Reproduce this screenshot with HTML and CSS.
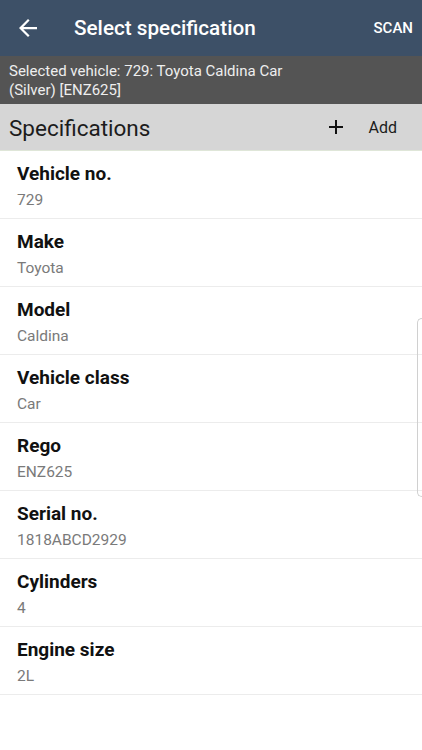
FILE: index.html
```html
<!DOCTYPE html>
<html lang="en">
<head>
    <meta charset="UTF-8">
    <meta name="viewport" content="width=device-width, initial-scale=1.0">
    <title>Select specification</title>
    <link rel="stylesheet" href="styles.css">
</head>
<body>
    <div class="app">
        <header class="toolbar">
            <button class="back-btn" type="button" aria-label="Back">
                <svg width="18" height="18" viewBox="0 0 16 16">
                    <path d="M16 7H3.8l5.6-5.6L8 0 0 8l8 8 1.4-1.4L3.8 9H16z" fill="#fff"/>
                </svg>
            </button>
            <h1 class="title">Select specification</h1>
            <button class="scan-btn" type="button">SCAN</button>
        </header>

        <div class="selected-bar">
            Selected vehicle: 729: Toyota Caldina Car<br>(Silver) [ENZ625]
        </div>

        <div class="section-head">
            <h2>Specifications</h2>
            <button class="add-btn" type="button">
                <svg width="14" height="14" viewBox="0 0 14 14">
                    <path d="M6 0h2v6h6v2H8v6H6V8H0V6h6z" fill="#111"/>
                </svg>
                <span>Add</span>
            </button>
        </div>

        <ul class="spec-list">
            <li><span class="label">Vehicle no.</span><span class="value">729</span></li>
            <li><span class="label">Make</span><span class="value">Toyota</span></li>
            <li><span class="label">Model</span><span class="value">Caldina</span></li>
            <li><span class="label">Vehicle class</span><span class="value">Car</span></li>
            <li><span class="label">Rego</span><span class="value">ENZ625</span></li>
            <li><span class="label">Serial no.</span><span class="value">1818ABCD2929</span></li>
            <li><span class="label">Cylinders</span><span class="value">4</span></li>
            <li><span class="label">Engine size</span><span class="value">2L</span></li>
        </ul>

        <div class="edge-glow"></div>
    </div>
</body>
</html>
```

FILE: styles.css
```css
/* Basic styling */
body {
    margin: 0;
    font-family: Roboto, "Noto Sans", Arial, sans-serif;
    background: #fff;
}

.app {
    position: relative;
    width: 422px;
    height: 750px;
    overflow: hidden;
    background: #fff;
}

button {
    background: none;
    border: none;
    padding: 0;
    font-family: inherit;
    cursor: pointer;
}

.toolbar {
    height: 56px;
    background-color: #3d5067;
    display: flex;
    align-items: center;
}

.back-btn {
    width: 56px;
    height: 56px;
    display: flex;
    align-items: center;
    justify-content: center;
    margin-right: 18px;
}

.title {
    flex: 1;
    margin: 0;
    color: #fff;
    font-size: 20.7px;
    font-weight: 500;
}

.scan-btn {
    color: #fff;
    font-size: 15px;
    font-weight: 500;
    margin-right: 9px;
}

.selected-bar {
    height: 48px;
    box-sizing: border-box;
    padding: 6px 9px 0;
    background-color: #545454;
    color: #eeeeee;
    font-size: 15px;
    line-height: 19px;
}

.section-head {
    height: 46px;
    background-color: #d6d6d6;
    border-bottom: 1px solid #dfe6d8;
    display: flex;
    align-items: center;
    padding: 0 25px 0 9px;
}

.section-head h2 {
    flex: 1;
    margin: 0;
    padding-top: 2px;
    font-size: 22.5px;
    font-weight: 400;
    color: #1c1c1c;
}

.add-btn {
    display: flex;
    align-items: center;
    gap: 26px;
    font-size: 16px;
    color: #1c1c1c;
}

.spec-list {
    list-style: none;
    margin: 0;
    padding: 0;
}

.spec-list li {
    height: 68px;
    box-sizing: border-box;
    border-bottom: 1px solid #ececec;
    padding: 11px 17px 0;
    display: flex;
    flex-direction: column;
}

.label {
    font-size: 19px;
    font-weight: 700;
    color: #111;
    line-height: 24px;
}

.value {
    margin-top: 4px;
    font-size: 15.5px;
    color: #7a7a7a;
    line-height: 20px;
}

.edge-glow {
    position: absolute;
    right: 0;
    top: 318px;
    width: 4px;
    height: 177px;
    border: 1px solid #d0d0d0;
    border-right: none;
    border-radius: 5px 0 0 5px;
}
```
